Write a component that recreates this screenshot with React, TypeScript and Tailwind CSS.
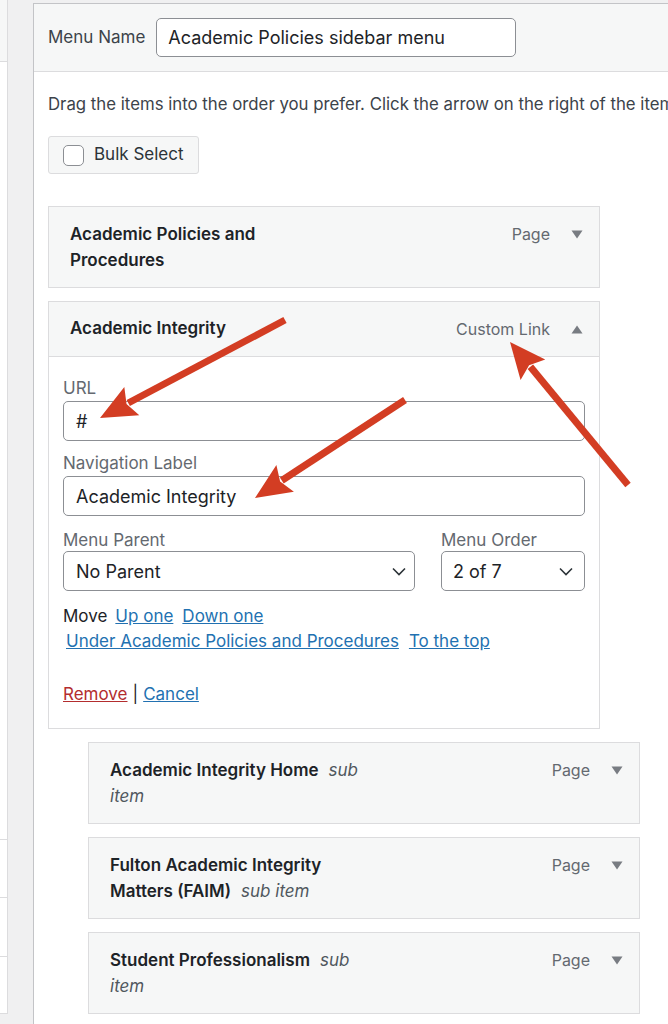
import React from "react";

// WordPress admin palette
const font = { fontFamily: "Inter, 'Open Sans', 'Liberation Sans', sans-serif" };

function Toggle({ up = false }: { up?: boolean }) {
  return (
    <svg width="12" height="9" viewBox="0 0 12 9" className="shrink-0">
      {up ? <polygon points="6,0.5 11.5,8.5 0.5,8.5" fill="#787c82" /> : <polygon points="0.5,0.5 11.5,0.5 6,8.5" fill="#787c82" />}
    </svg>
  );
}

function Chevron() {
  return (
    <svg width="14" height="9" viewBox="0 0 14 9" className="shrink-0">
      <polyline points="1,1.5 7,7.5 13,1.5" fill="none" stroke="#2c3338" strokeWidth="1.6" />
    </svg>
  );
}

function Arrow({ x1, y1, x2, y2 }: { x1: number; y1: number; x2: number; y2: number }) {
  const dx = x2 - x1;
  const dy = y2 - y1;
  const len = Math.hypot(dx, dy);
  const ux = dx / len;
  const uy = dy / len;
  const hl = 36;
  const hw = 16;
  const bx = x2 - ux * hl;
  const by = y2 - uy * hl;
  const px = -uy;
  const py = ux;
  return (
    <g>
      <line x1={x1} y1={y1} x2={bx + ux * 4} y2={by + uy * 4} stroke="#d33d23" strokeWidth="7" strokeLinecap="butt" />
      <polygon
        points={`${x2},${y2} ${bx + px * hw},${by + py * hw} ${bx + ux * 6},${by + uy * 6} ${bx - px * hw},${by - py * hw}`}
        fill="#d33d23"
      />
    </g>
  );
}

function Item({ children, type = "Page", indent = false }: { children: React.ReactNode; type?: string; indent?: boolean }) {
  return (
    <div className={`${indent ? "ml-[40px]" : ""} w-[552px] h-[82px] border border-[#dcdcde] bg-[#f6f7f7] flex items-start pl-[21px] pr-[16px] pt-[14px]`}>
      <div className="flex-1 text-[17px] leading-[26px] text-[#1d2327]">{children}</div>
      <span className="text-[16px] leading-[26px] text-[#646970] mr-[21px]">{type}</span>
      <div className="h-[26px] flex items-center">
        <Toggle />
      </div>
    </div>
  );
}

function Sub({ text = "sub" }: { text?: string }) {
  return <span className="ml-[10px] italic font-normal text-[#50575e]">{text}</span>;
}

export default function App() {
  return (
    <div className="relative w-[668px] h-[1024px] bg-[#f0f0f1] overflow-hidden flex" style={font}>
      {/* left column panel, mostly cut off */}
      <div className="w-[8px] h-[1014px] bg-white border-r border-b border-[#dcdcde] flex flex-col shrink-0">
        <div className="h-[62px] bg-[#f6f7f7] border-b border-[#dcdcde]" />
        <div className="flex-1" />
        <div className="h-[58px] border-t border-[#dcdcde]" />
        <div className="h-[59px] border-t border-[#dcdcde]" />
        <div className="h-[57px] border-t border-[#dcdcde]" />
      </div>

      {/* main menu editor */}
      <div className="ml-[25px] mt-[3px] flex-1 bg-white border-l border-t border-[#c3c4c7] overflow-hidden">
        <div className="h-[68px] bg-[#f6f7f7] border-b border-[#dcdcde] flex items-center pl-[14px]">
          <span className="text-[17px] text-[#3c434a]">Menu Name</span>
          <div className="ml-[11px] w-[360px] h-[39px] rounded-[5px] border border-[#8c8f94] bg-white flex items-center px-[11px] text-[18px] text-[#1d2327]">
            Academic Policies sidebar menu
          </div>
        </div>

        <div className="pl-[14px] pt-[21px]">
          <p className="whitespace-nowrap text-[16.8px] leading-[22px] text-[#3c434a]">
            Drag the items into the order you prefer. Click the arrow on the right of the item to reveal additional configuration options.
          </p>

          <div className="mt-[21px] w-[151px] h-[38px] rounded-[3px] border border-[#dcdcde] bg-[#f6f7f7] flex items-center pl-[14px] gap-[10px]">
            <div className="w-[21px] h-[21px] rounded-[5px] border border-[#8c8f94] bg-white" />
            <span className="text-[17px] text-[#2c3338]">Bulk Select</span>
          </div>

          <div className="mt-[32px] flex flex-col gap-[13px]">
            <Item>
              <span className="font-semibold">
                Academic Policies and
                <br />
                Procedures
              </span>
            </Item>

            {/* expanded item */}
            <div className="w-[552px] border border-[#dcdcde] bg-white">
              <div className="h-[55px] bg-[#f6f7f7] border-b border-[#dcdcde] flex items-center pl-[21px] pr-[16px]">
                <span className="flex-1 text-[17px] font-semibold text-[#1d2327]">Academic Integrity</span>
                <span className="text-[16px] text-[#646970] mr-[21px]">Custom Link</span>
                <Toggle up />
              </div>
              <div className="px-[14px] pt-[20px] pb-[21px] text-[17px]">
                <div className="leading-[22px] text-[#646970]">URL</div>
                <div className="mt-[2px] h-[40px] rounded-[5px] border border-[#8c8f94] flex items-center px-[12px] text-[18px] text-[#1d2327]">#</div>
                <div className="mt-[11px] leading-[22px] text-[#646970]">Navigation Label</div>
                <div className="mt-[2px] h-[40px] rounded-[5px] border border-[#8c8f94] flex items-center px-[12px] text-[18px] text-[#1d2327]">
                  Academic Integrity
                </div>
                <div className="mt-[13px] flex gap-[26px]">
                  <div className="w-[352px]">
                    <div className="leading-[22px] text-[#646970]">Menu Parent</div>
                    <div className="h-[40px] rounded-[5px] border border-[#8c8f94] flex items-center justify-between pl-[12px] pr-[8px] text-[18px] text-[#1d2327]">
                      No Parent
                      <Chevron />
                    </div>
                  </div>
                  <div className="w-[144px]">
                    <div className="leading-[22px] text-[#646970]">Menu Order</div>
                    <div className="h-[40px] rounded-[5px] border border-[#8c8f94] flex items-center justify-between pl-[11px] pr-[11px] text-[18px] text-[#1d2327]">
                      2 of 7
                      <Chevron />
                    </div>
                  </div>
                </div>
                <div className="mt-[13px] leading-[25px] text-[#1d2327]">
                  Move
                  <a className="ml-[8px] text-[#2271b1] underline">Up one</a>
                  <a className="ml-[9px] text-[#2271b1] underline">Down one</a>
                </div>
                <div className="leading-[25px] pl-[3px]">
                  <a className="text-[#2271b1] underline">Under Academic Policies and Procedures</a>
                  <a className="ml-[10px] text-[#2271b1] underline">To the top</a>
                </div>
                <div className="mt-[28px] leading-[25px] text-[#1d2327]">
                  <a className="text-[#b32d2e] underline">Remove</a>
                  <span className="mx-[5px]">|</span>
                  <a className="text-[#2271b1] underline">Cancel</a>
                </div>
              </div>
            </div>

            <Item indent>
              <span className="font-semibold">Academic Integrity Home</span>
              <Sub />
              <br />
              <span className="italic text-[#50575e]">item</span>
            </Item>
            <Item indent>
              <span className="font-semibold">
                Fulton Academic Integrity
                <br />
                Matters (FAIM)
              </span>
              <Sub text="sub item" />
            </Item>
            <Item indent>
              <span className="font-semibold">Student Professionalism</span>
              <Sub />
              <br />
              <span className="italic text-[#50575e]">item</span>
            </Item>
          </div>
        </div>
      </div>

      {/* red annotation arrows */}
      <svg className="absolute inset-0 pointer-events-none" width="668" height="1024" viewBox="0 0 668 1024">
        <Arrow x1={285} y1={320} x2={100} y2={418} />
        <Arrow x1={405} y1={400} x2={255} y2={498} />
        <Arrow x1={628} y1={485} x2={510} y2={342} />
      </svg>
    </div>
  );
}
